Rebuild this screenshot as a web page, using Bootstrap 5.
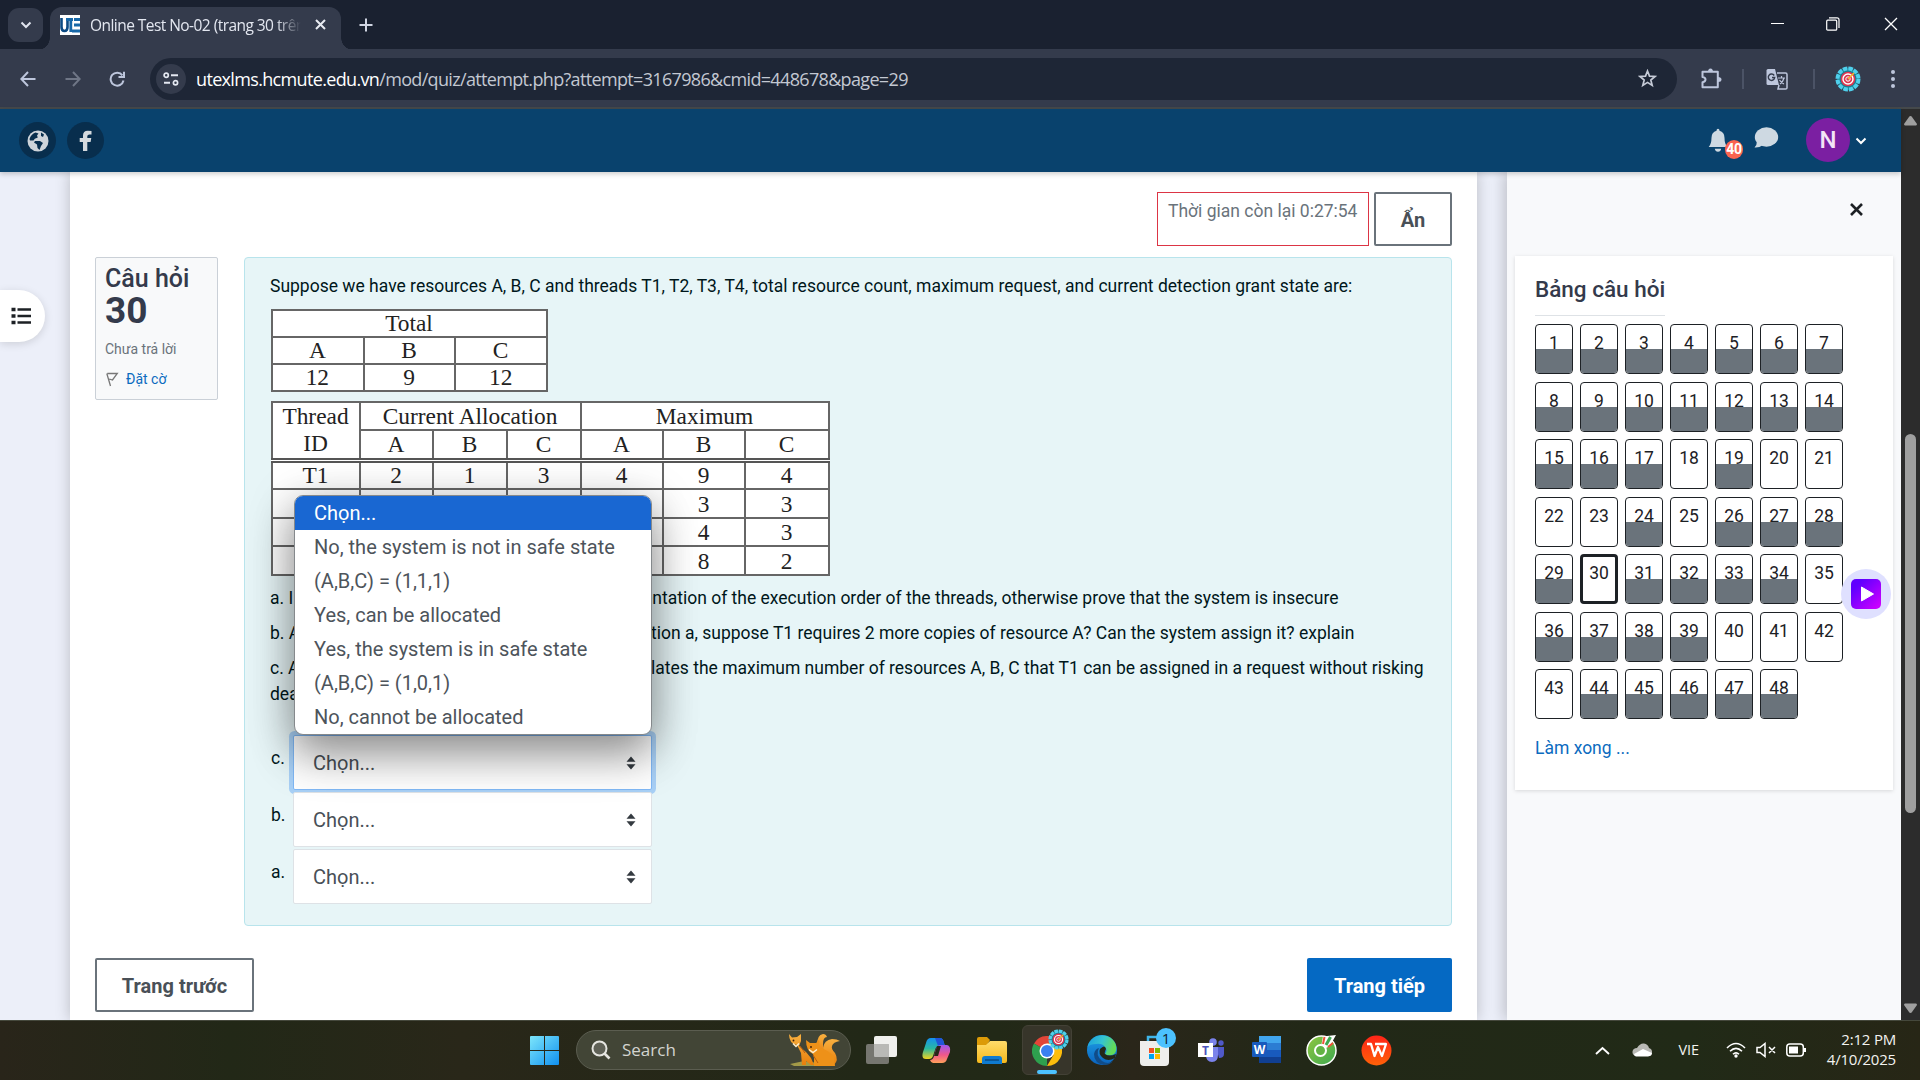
<!DOCTYPE html>
<html lang="vi">
<head>
<meta charset="utf-8">
<title>Online Test No-02</title>
<link href="https://cdn.jsdelivr.net/npm/bootstrap@5.3.0/dist/css/bootstrap.min.css" rel="stylesheet">
<style>
body{width:1920px;height:1080px;overflow:hidden;font-family:Roboto,sans-serif;font-size:17.5px;line-height:26px;color:#14202b;background:#eceff9}
.ui{font-family:"Open Sans","Noto Sans",sans-serif}
svg{display:block;flex:none}
.tabstrip{height:50px;background:#1a2130;padding-left:8px;padding-top:8px}
.tabsearch{width:35px;height:34px;border-radius:11px;background:#343b4c}
.browsertab{width:291px;height:43px;margin-left:7px;margin-top:-1px;border-radius:12px 12px 0 0;background:#343b4c;padding-left:10px;position:relative;color:#e3e7f0}
.browsertab::before,.browsertab::after{content:"";position:absolute;bottom:0;width:12px;height:12px}
.browsertab::before{left:-12px;background:radial-gradient(circle at 0 0,transparent 11.5px,#343b4c 12px)}
.browsertab::after{right:-12px;background:radial-gradient(circle at 100% 0,transparent 11.5px,#343b4c 12px)}
.tabtitle{width:211px;margin-left:10px;font-size:15.5px;letter-spacing:-.55px;white-space:nowrap;-webkit-mask-image:linear-gradient(90deg,#000 88%,transparent 100%)}
.toolbar{height:59px;background:#343b4c;border-bottom:2px solid #45494b;box-shadow:0 -1px 0 #343b4c}
.address{width:1527px;height:42px;border-radius:21px;background:#1e2636;margin-left:24px;padding:0 20px 0 6px;color:#c3c8d2;font-size:18px;letter-spacing:-.66px}
.siteinfo{width:30px;height:30px;border-radius:50%;background:#343b4c}
.vsep{width:2px;height:20px;background:#4b5366}
.sitebar{height:63px;width:1901px;background:#09426d;padding-left:19px;box-shadow:0 2px 5px #0003;position:relative;z-index:2}
.round{width:37px;height:37px;border-radius:50%;background:#082e4d}
.avatar{width:44px;height:44px;border-radius:50%;background:#7b1fa2;color:#f3e5f5;font-size:24px;font-weight:500;margin-top:-1px}
.count{position:absolute;left:17px;top:12px;width:18px;height:19px;border-radius:9px;background:#fa6450;color:#fff;font:700 14px/19px Roboto,sans-serif;text-align:center;letter-spacing:-.3px}
.viewport{height:848px}
.pagebody{width:1901px;padding-left:70px}
.sheet{width:1407px;background:#fff;box-shadow:0 0 14px #00000038;padding:20px 25px 0}
.timer{width:212px;height:54px;border:1px solid #dc3545;color:#6a737b;padding:5px 0 0 10px;white-space:nowrap}
.btn-line{border:2px solid #6a737b;border-radius:2px;color:#495057;background:#fff;font-size:20px;font-weight:700;height:54px;padding:1px 0 0}
.btn-next{border-radius:2px;background:#0569c3;color:#fff;font-size:20px;font-weight:700;height:54px;width:145px;padding:1px 0 0}
.qinfo{width:123px;height:143px;border:1px solid #cad0d7;border-radius:2px;background:#f8f9fa;padding:8px 9px}
.qinfo h3{font-size:25px;line-height:26px;color:#343a4b;margin:0;font-weight:500;white-space:nowrap}
.qinfo h3 span{font-size:37px;line-height:37px;font-weight:700;display:block}
.tiny{font-size:14px;line-height:20px}
.question{width:1208px;height:669px;margin-left:26px;background:#e7f5f7;border:1px solid #b8e4ec;border-radius:4px;padding:15px 24px 0 25px;position:relative;color:#00171b}
.sheetimg{border-collapse:collapse;table-layout:fixed;background:#fff;font-family:"Liberation Serif",serif;color:#222;font-size:23.4px;text-align:center;line-height:24px;margin-left:1px}
.sheetimg td{border:2px solid #666;padding:0 1px 0 0;overflow:hidden}
.sheetimg .dbl td{border-bottom:5px double #555}
.chooser{width:359px;height:55px;background:#fff;border:1px solid #dee2e6;border-radius:2px;padding:0 15px 0 19px;font-size:20px;color:#495057}
.chooser.on{border-color:#80b8f5;box-shadow:0 0 0 4px #a8d0f6}
.qlabel{width:22px;padding-top:11px}
.menu{position:absolute;z-index:4;left:49px;top:237px;width:358px;height:240px;border:1px solid #85898c;border-radius:9px;background:#fff;box-shadow:0 22px 44px #0000004d,0 8px 46px #00000040;overflow:hidden;font-size:20px;line-height:34px;color:#4d545b}
.menu div{padding-left:19px;height:34px;white-space:nowrap}
.menu .sel{background:#1967d2;color:#fff}
.drawer{width:394px;margin-left:30px;background:#f8f9fb;box-shadow:-3px 0 14px #0003;padding:84px 8px 0;position:relative}
.navcard{height:534px;background:#fff;box-shadow:0 1px 4px #00000022;padding:17px 0 0 20px}
.navcard h5{font-size:22.5px;line-height:32px;font-weight:500;color:#343a4b;border-bottom:1px solid #dee2e6;width:130px;height:43px;margin:0 0 8px;white-space:nowrap}
.grid{display:grid;grid-template-columns:repeat(7,38px);column-gap:7px;row-gap:7.5px}
.qn{height:50px;border:1px solid #1d2125;border-radius:4px;text-align:center;padding-top:5px;color:#1d2125;position:relative;font-size:17.5px;overflow:hidden}
.qn.done::after{content:"";position:absolute;left:0;right:0;bottom:0;height:24px;background:#6a737b}
.qn.now{border-width:3px;padding-top:3px}
.listbtn{position:absolute;left:0;top:290px;width:45px;height:52px;background:#fff;border-radius:0 26px 26px 0;box-shadow:0 2px 8px #0002;padding:16px 0 0 11px}
.play{position:absolute;z-index:5;left:1841px;top:569px}
.scroller{width:19px;height:911px;position:absolute;right:0;top:109px;background:#2c2c2c;padding:7px 3px}
.thumb{width:11px;height:379px;border-radius:6px;background:#9f9f9f;margin-left:1px}
.taskbar{height:60px;background:linear-gradient(90deg,#29251a,#222817 12%,#292719 24%,#222817 45%,#222917 52%,#2a261a 59%,#222817 68%,#212a17 88%,#272616);border-top:1px solid #45483c;color:#f3f3f0;position:relative;padding-bottom:1px}
.find{width:275px;height:40px;border-radius:20px;background:#424536;border:1px solid #5b5d50;margin-left:17px;padding:0 10px 0 14px;color:#d3d4cf;font-size:17px}
.slot{width:55px;display:flex;justify-content:center;align-items:center}
.hot{width:50px;height:50px;border-radius:6px;background:#37352a;border:1px solid #434136;position:relative}
</style>
<script src="https://cdn.jsdelivr.net/npm/bootstrap@5.3.0/dist/js/bootstrap.bundle.min.js"></script>
</head>
<body>
<svg width="0" height="0" class="position-absolute"><defs>
<linearGradient id="gwin" x1="0" y1="0" x2="1" y2="1"><stop stop-color="#7de6fb"/><stop offset="1" stop-color="#1090f0"/></linearGradient>
<linearGradient id="gplay" x1="0" y1="0" x2="1" y2="1"><stop offset=".2" stop-color="#6000ff"/><stop offset=".9" stop-color="#c800ff"/></linearGradient>
<linearGradient id="gcop1" x1="0" y1="0" x2="0" y2="1"><stop stop-color="#1590f0"/><stop offset=".5" stop-color="#2ab8a0"/><stop offset="1" stop-color="#f0d420"/></linearGradient>
<linearGradient id="gcop2" x1="0" y1="0" x2="0" y2="1"><stop stop-color="#9a58f0"/><stop offset=".55" stop-color="#f0578a"/><stop offset="1" stop-color="#ffa05a"/></linearGradient>
<linearGradient id="gfold" x1="0" y1="0" x2="0" y2="1"><stop stop-color="#ffdc6b"/><stop offset="1" stop-color="#f6b91c"/></linearGradient>
<linearGradient id="gedge" x1="0" y1="0" x2="1" y2=".3"><stop stop-color="#1a9de0"/><stop offset=".55" stop-color="#35c4d0"/><stop offset="1" stop-color="#62dc5a"/></linearGradient>
<linearGradient id="gedge2" x1="0" y1="0" x2="0" y2="1"><stop stop-color="#1fa3e8"/><stop offset="1" stop-color="#0a62bd"/></linearGradient>
<linearGradient id="gcc" x1="0" y1="0" x2="1" y2="1"><stop stop-color="#8fc640"/><stop offset="1" stop-color="#3da850"/></linearGradient>
<linearGradient id="gwps" x1="0" y1="0" x2="0" y2="1"><stop stop-color="#ff2418"/><stop offset="1" stop-color="#ff6208"/></linearGradient>
<linearGradient id="gfox" x1="0" y1="0" x2="0" y2="1"><stop stop-color="#f8b040"/><stop offset="1" stop-color="#e87f0c"/></linearGradient>
<symbol id="gear" viewBox="0 0 26 26"><circle cx="13" cy="13" r="11" fill="#187e92"/><circle cx="13" cy="13" r="10.500" fill="none" stroke="#4fd0ec" stroke-width="4" stroke-dasharray="4.500 1"/><circle cx="13" cy="13" r="7.300" fill="#dc3650"/><circle cx="13" cy="13" r="5" fill="none" stroke="#fff" stroke-width="1.400"/><circle cx="13" cy="13" r="2.200" fill="#dc3650" stroke="#fff"/><path d="M13 13L19 7" stroke="#f2b429" stroke-width="1.600"/></symbol>
<symbol id="updn" viewBox="0 0 10 14"><path d="M5 .5L9.500 5.700H.5zM5 13.500L9.500 8.300H.5z" fill="#343a40"/></symbol>
</defs></svg>

<header class="ui">
 <div class="tabstrip d-flex align-items-start">
  <div class="tabsearch d-flex align-items-center justify-content-center"><svg width="12" height="8"><path d="M1.500 1.500L6 6l4.500-4.500" fill="none" stroke="#e0e4ee" stroke-width="2"/></svg></div>
  <div class="browsertab d-flex align-items-center pb-2">
   <svg width="20" height="20"><rect width="20" height="20" fill="#fff"/><path d="M1.500 3v9q0 4 3 4t3-4V3" fill="none" stroke="#0b4a83" stroke-width="2.600"/><path d="M6 4.500h7M10.800 4.500V17M20 4.500h-6M20 10h-6M20 16h-8" stroke="#1768a8" stroke-width="2.800"/></svg>
   <div class="tabtitle">Online Test No-02 (trang 30 trên</div>
   <svg style="margin-left:13px" width="13" height="13"><path d="M2 2l9 9M11 2l-9 9" stroke="#e8ebf2" stroke-width="2"/></svg>
  </div>
  <svg style="margin:10px 0 0 18px" width="14" height="14"><path d="M7 0.500v13M.5 7h13" stroke="#d0d5e2" stroke-width="2"/></svg>
  <div class="d-flex align-items-center ms-auto" style="margin-top:9px;margin-right:22px">
   <svg width="14" height="14"><path d="M1 6.500h13" stroke="#fff"/></svg>
   <svg style="margin:0 44px 0 42px" width="14" height="14"><rect x=".7" y="3.200" width="10" height="10" rx="1" fill="none" stroke="#fff" stroke-width="1.200"/><path d="M3 .8h8q2 0 2 2V11" fill="none" stroke="#fff" stroke-width="1.200"/></svg>
   <svg width="14" height="14"><path d="M1 1l12 12M13 1L1 13" stroke="#fff" stroke-width="1.300"/></svg>
  </div>
 </div>
 <div class="toolbar d-flex align-items-center">
  <svg style="margin-left:20px" width="16" height="16"><path d="M15.500 8H1.500M8 1L1.300 8 8 15" fill="none" stroke="#bdc6dc" stroke-width="2"/></svg>
  <svg style="margin-left:29px" width="16" height="16"><path d="M.5 8h14M8 1l6.700 7L8 15" fill="none" stroke="#6f7686" stroke-width="2"/></svg>
  <svg style="margin-left:28px" width="17" height="16"><path d="M14.500 9.500A6.500 6.500 0 1 1 13.400 4.300M15 .8V6H9.500" fill="none" stroke="#bdc6dc" stroke-width="2"/></svg>
  <div class="address d-flex align-items-center">
   <div class="siteinfo d-flex align-items-center justify-content-center"><svg width="16" height="14"><path d="M8 3.200h7M1 10.800h6" stroke="#e4e8f1" stroke-width="2"/><circle cx="3.200" cy="3.200" r="2.100" fill="none" stroke="#e4e8f1" stroke-width="1.700"/><circle cx="12.500" cy="10.800" r="2.100" fill="none" stroke="#e4e8f1" stroke-width="1.700"/></svg></div>
   <div class="text-nowrap" style="margin-left:10px"><span class="text-white">utexlms.hcmute.edu.vn</span>/mod/quiz/attempt.php?attempt=3167986&amp;cmid=448678&amp;page=29</div>
   <svg class="ms-auto" width="19" height="19" viewBox="0 0 19 19"><path d="M9.500 2l2 5.100 5.500.4-4.200 3.500 1.400 5.400-4.700-3-4.700 3L6.200 11 2 7.500l5.500-.4z" fill="none" stroke="#c6cbd7" stroke-width="1.700"/></svg>
  </div>
  <svg style="margin-left:23px" width="22" height="22"><path d="M2.500 3.800h15.300v15.500H2.500v-5q3-.5 3-2.700t-3-2.700z" fill="none" stroke="#bdc6dc" stroke-width="2" stroke-linejoin="round"/><path d="M8 4q0-3.500 2.500-3.500T13 4zM18 9q3.500 0 3.500 2.500T18 14z" fill="#bdc6dc"/></svg>
  <div class="vsep" style="margin-left:20px"></div>
  <svg style="margin-left:22px" width="22" height="22"><path d="M2 1h7l4 16H2Q.5 17 .5 15.500v-13Q.5 1 2 1z" fill="#bdc6dc"/><path d="M11 5h8.500q1.500 0 1.500 1.500V20q0 1-1.500 1H12l1-4" fill="none" stroke="#bdc6dc" stroke-width="1.500"/><path d="M12 10h7M15.500 8v2M18 10q-1 4-4 6M13.500 12q2 3 4.500 4" fill="none" stroke="#bdc6dc" stroke-width="1.200"/><path d="M8.200 7.500A3.200 3.200 0 1 0 8.700 9.500H6" fill="none" stroke="#343b4c" stroke-width="1.400"/></svg>
  <div class="vsep" style="margin-left:25px"></div>
  <svg style="margin-left:20px" width="26" height="26"><use href="#gear"/></svg>
  <svg style="margin-left:29px" width="6" height="20" fill="#bdc6dc"><circle cx="3" cy="3" r="2"/><circle cx="3" cy="10" r="2"/><circle cx="3" cy="17" r="2"/></svg>
 </div>
</header>

<nav class="sitebar d-flex align-items-center">
 <div class="round d-flex align-items-center justify-content-center"><svg width="22" height="22"><circle cx="11" cy="11" r="10.500" fill="#ced4da"/><path d="M2.500 9q1.500-5 6-6.500l3 1-1.500 2 .8 2-3 1.300-1.300 1.700H3zM14 2.500l3 2-1 2.500-2-1zM8 11h5l3 2-2 3-1.500 4-2-2-.5-3.500-3-2z" fill="#082e4d"/></svg></div>
 <div class="round d-flex align-items-center justify-content-center" style="margin-left:11px"><svg width="14" height="22"><path d="M4 21V12H.7V8H4V5.500Q4 .8 8.800.8q2 0 3.700.3v3.400h-2Q8.300 4.500 8.300 6.300V8h4l-.7 4H8.300v9z" fill="#d5dade"/></svg></div>
 <div class="ms-auto position-relative"><svg width="20" height="25"><path d="M10 .8q1.500 0 1.500 2 5 1.500 5 7 0 6 2.800 9.200H.7Q3.500 16 3.500 9.800q0-5.500 5-7 0-2 1.500-2zM6.800 20.800h6.400q-.5 3-3.200 3t-3.200-3z" fill="#ced9e2"/></svg><span class="count">40</span></div>
 <svg style="margin:-6px 27px 0 26px" width="25" height="22"><ellipse cx="12.500" cy="10" rx="11.700" ry="9.700" fill="#ced9e2"/><path d="M3 14q0 4-2.500 6.500Q5 21 9 18z" fill="#ced9e2"/></svg>
 <div class="avatar d-flex align-items-center justify-content-center">N</div>
 <svg style="margin:1px 34px 0 5px" width="12" height="8"><path d="M1.500 1.500L6 6l4.500-4.500" fill="none" stroke="#fff" stroke-width="2"/></svg>
</nav>

<div class="viewport overflow-hidden">
<div class="pagebody d-flex h-100">
 <main class="sheet">
  <div class="d-flex justify-content-end"><div class="timer">Thời gian còn lại 0:27:54</div><button class="btn btn-line" style="width:78px;margin-left:5px">Ẩn</button></div>
  <div class="d-flex align-items-start" style="margin-top:11px">
   <aside class="qinfo">
    <h3>Câu hỏi <span>30</span></h3>
    <div class="tiny" style="color:#6a737b;margin-top:10px">Chưa trả lời</div>
    <div class="tiny d-flex align-items-center" style="color:#0b6bbf;margin-top:10px"><svg width="13" height="15" style="margin:0 7px 0 1px"><path d="M.8 1.500L4.500 14M1.300 1.500h10L6.500 8 3.200 7" fill="none" stroke="#777" stroke-width="1.300"/></svg>Đặt cờ</div>
   </aside>
   <section class="question">
    <div class="text-nowrap">Suppose we have resources A, B, C and threads T1, T2, T3, T4, total resource count, maximum request, and current detection grant state are:</div>
    <table class="sheetimg" style="width:277px;margin-top:10px;line-height:23px">
     <tr style="height:27px"><td colspan="3">Total</td></tr>
     <tr style="height:27px"><td>A</td><td>B</td><td>C</td></tr>
     <tr style="height:27px"><td>12</td><td>9</td><td>12</td></tr>
    </table>
    <table class="sheetimg" style="width:557px;margin-top:9px">
     <colgroup><col style="width:88px"><col style="width:73px"><col style="width:74px"><col style="width:74px"><col style="width:82px"><col style="width:82px"><col style="width:84px"></colgroup>
     <tr style="height:28px"><td rowspan="2" style="line-height:27px;border-bottom:5px double #555">Thread<br>ID</td><td colspan="3">Current Allocation</td><td colspan="3">Maximum</td></tr>
     <tr class="dbl" style="height:30px"><td>A</td><td>B</td><td>C</td><td>A</td><td>B</td><td>C</td></tr>
     <tr style="height:29px"><td>T1</td><td>2</td><td>1</td><td>3</td><td>4</td><td>9</td><td>4</td></tr>
     <tr style="height:29px"><td></td><td></td><td></td><td></td><td></td><td>3</td><td>3</td></tr>
     <tr style="height:28px"><td></td><td></td><td></td><td></td><td></td><td>4</td><td>3</td></tr>
     <tr style="height:29px"><td></td><td></td><td></td><td></td><td></td><td>8</td><td>2</td></tr>
    </table>
    <div class="d-flex text-nowrap" style="margin-top:9px"><span style="width:373px">a. I</span><span>entation of the execution order of the threads, otherwise prove that the system is insecure</span></div>
    <div class="d-flex text-nowrap" style="margin-top:9px"><span style="width:381px">b. A</span><span>tion a, suppose T1 requires 2 more copies of resource A? Can the system assign it? explain</span></div>
    <div class="d-flex text-nowrap" style="margin-top:9px"><span style="width:381px">c. A</span><span>lates the maximum number of resources A, B, C that T1 can be assigned in a request without risking</span></div>
    <div>dead</div>
    <div class="d-flex" style="margin:28px 0 0 1px"><span class="qlabel" style="padding-top:10px">c.</span><div class="chooser on d-flex align-items-center justify-content-between">Chọn...<svg width="10" height="14"><use href="#updn"/></svg></div></div>
    <div class="d-flex" style="margin:2px 0 0 1px"><span class="qlabel" style="padding-top:10px">b.</span><div class="chooser d-flex align-items-center justify-content-between">Chọn...<svg width="10" height="14"><use href="#updn"/></svg></div></div>
    <div class="d-flex" style="margin:2px 0 0 1px"><span class="qlabel" style="padding-top:10px">a.</span><div class="chooser d-flex align-items-center justify-content-between">Chọn...<svg width="10" height="14"><use href="#updn"/></svg></div></div>
    <div class="menu"><div class="sel">Chọn...</div><div>No, the system is not in safe state</div><div>(A,B,C) = (1,1,1)</div><div>Yes, can be allocated</div><div>Yes, the system is in safe state</div><div>(A,B,C) = (1,0,1)</div><div>No, cannot be allocated</div></div>
   </section>
  </div>
  <div class="d-flex justify-content-between" style="margin-top:32px"><button class="btn btn-line" style="width:159px">Trang trước</button><button class="btn btn-next">Trang tiếp</button></div>
 </main>
 <aside class="drawer">
  <svg class="position-absolute" style="left:342px;top:30px" width="15" height="15"><path d="M2 2l11 11M13 2L2 13" stroke="#1d2125" stroke-width="2.600"/></svg>
  <div class="navcard">
   <h5>Bảng câu hỏi</h5>
   <div class="grid" id="grid"></div>
   <div style="color:#0b6bbf;margin-top:16px">Làm xong ...</div>
  </div>
 </aside>
</div>
</div>
<div class="listbtn"><svg width="20" height="20"><path d="M6.500 3.500H20M6.500 10H20M6.500 16.500H20" stroke="#1d2125" stroke-width="2.400"/><path d="M.5 3.500h4M.5 10h4M.5 16.500h4" stroke="#1d2125" stroke-width="3.600"/></svg></div>
<svg class="play" width="50" height="50"><circle cx="25" cy="25" r="25" fill="#dfe0ff"/><rect x="10" y="10" width="30" height="30" rx="5" fill="url(#gplay)"/><path d="M20.500 18l12 7-12 7z" fill="#fff" stroke="#fff" stroke-linejoin="round"/></svg>
<div class="scroller d-flex flex-column">
 <svg width="13" height="10"><path d="M6.500 0q1 0 1.500 1l5 7q0 1-1 1.500H1Q0 9 0 8l5-7q.5-1 1.500-1z" fill="#9f9f9f"/></svg>
 <div class="thumb" style="margin-top:308px"></div>
 <svg class="mt-auto" width="13" height="10"><path d="M6.500 10q-1 0-1.500-1L0 2Q0 .8 1 .5h11q1 .3 1 1.500L8 9q-.5 1-1.500 1z" fill="#9f9f9f"/></svg>
</div>

<footer class="taskbar ui d-flex align-items-center">
 <svg style="margin-left:530px" width="29" height="29"><path d="M1 0h13v14H0V1q0-1 1-1zM15 0h13q1 0 1 1v13H15zM0 15h14v14H1q-1 0-1-1zM15 15h14v13q0 1-1 1H15z" fill="url(#gwin)"/></svg>
 <div class="find d-flex align-items-center">
  <svg width="20" height="20"><circle cx="8.500" cy="8.500" r="7" fill="#5f6156" stroke="#e5e5e0" stroke-width="2"/><path d="M13.500 13.500l5 5" stroke="#e5e5e0" stroke-width="2.600"/></svg>
  <span style="margin-left:11px">Search</span>
  <svg class="ms-auto" width="52" height="34"><path d="M2 31l14-3 14 2 3 3H6z" fill="#a39a48"/><path d="M29 12q0-10 6-11 3 0 4 3-4 0-4 7l1 10-6 1z" fill="url(#gfox)"/><path d="M35 15q1-8 9-9 5 0 8 2-7 1-8 5-1 3 3 7 4 7-1 12l-8-4q5-2 0-7-3-3-3-6z" fill="url(#gfox)"/><path d="M1 1l3 3.500 5-.5 4-3 0 7-2 5 7 6 5 6 3 7h-3l-5-4 0 4h-4l-1-12-4-8Q1 11 1 1z" fill="url(#gfox)"/><path d="M18 7l4 3 6 0 3-3 1 8q9 2 14 9l1 9H26l0-8-1-4q-7-3-7-14z" fill="#ee9118"/><path d="M5 10.500l3 3 3-3M21 16.500l4 3 4-3" fill="none" stroke="#fff0d0" stroke-width="1.500"/><circle cx="5.500" cy="7.500" r=".9" fill="#3a1c08"/><circle cx="23" cy="14" r=".9" fill="#3a1c08"/><path d="M12 13l5 7M25 22l5 8" stroke="#b85c10" fill="none"/></svg>
 </div>
 <div class="d-flex align-items-center" style="margin-left:3px">
  <div class="slot"><svg width="31" height="29"><rect x="8" y="0" width="23" height="21" rx="2" fill="#f0f0ee"/><rect y="8" width="23" height="20" rx="2" fill="#767670"/><path d="M8 8h14q1 0 1 1v12H9q-1 0-1-1z" fill="#b9b9b6"/></svg></div>
  <div class="slot"><svg width="29" height="27" viewBox="0 0 29 27"><path d="M9 1h9q3 0 4 5l1 3h-6q-3 0-4 4l-2 6q-1 3-4 3H4q-5 0-3-7l3-9q1-5 5-5z" fill="url(#gcop1)"/><path d="M13 1h5q3 0 4 5l1 3h-7z" fill="#2054d8"/><path d="M20 26h-9q-2 0-3-3 3 0 4-4l2-7q1-4 5-4h6q4 1 3 7l-3 7q-1 4-5 4z" fill="url(#gcop2)"/><path d="M12 19l3-10h4l-3 10z" fill="#292719"/></svg></div>
  <div class="slot"><svg width="30" height="27"><path d="M0 2q0-2 2-2h8l3 3-3 5H0z" fill="#dc9b08"/><path d="M0 8h9l4-4h15q2 0 2 2v18q0 2-2 2H2q-2 0-2-2z" fill="url(#gfold)"/><path d="M5 27v-5q0-3 3-3h14q3 0 3 3v5z" fill="#0f7bd0"/><path d="M8 23h14" stroke="#0a4b86" stroke-width="1.500"/></svg></div>
  <div class="slot"><div class="hot"><svg style="margin:10px 0 0 9px" width="30" height="30" viewBox="0 0 30 30"><path d="M15 15L2 7.500A15 15 0 0 1 28 7.500z" fill="#e24538"/><path d="M15 15v15A15 15 0 0 1 2 7.500z" fill="#2ea04e"/><path d="M15 7.500h13A15 15 0 0 1 15 30l6.500-11z" fill="#fdbd0c"/><circle cx="15" cy="15" r="7.500" fill="#fff"/><circle cx="15" cy="15" r="6" fill="#3a80f0"/></svg><svg class="position-absolute" style="left:25px;top:3px" width="21" height="21"><use href="#gear"/></svg><div class="position-absolute" style="left:14px;bottom:0;width:20px;height:4px;border-radius:2px;background:#4cc2ff"></div></div></div>
  <div class="slot"><svg width="30" height="30"><circle cx="15" cy="15" r="15" fill="url(#gedge2)"/><path d="M.5 12C3 1 15-2 23 2.500S31 19 25 20q-5 1-7-1 3-4 0-7-3-4-9-3Q3 9 .5 12z" fill="url(#gedge)"/><path d="M12 13q-4 7 3 13 6 4 11 0-3 4-8 4Q7 29 7 19q1-5 5-6z" fill="#114c88"/><path d="M13 14q5-5 6 0-2 4-1 5 4 3 11 0l-1 4q-7 4-12 0-5-4-3-9z" fill="#242718"/></svg></div>
  <div class="slot"><svg style="margin-top:-7px" width="38" height="38" viewBox="0 0 38 38"><path d="M10 14V9h10" stroke="#3fb5e8" stroke-width="2.500" fill="none"/><path d="M2 13h29v21q0 4-4 4H6q-4 0-4-4z" fill="#eeeeec"/><path d="M11 20h5v5h-5z" fill="#f25022"/><path d="M17 20h5v5h-5z" fill="#7fba00"/><path d="M11 26h5v5h-5z" fill="#00a4ef"/><path d="M17 26h5v5h-5z" fill="#ffb900"/><circle cx="28" cy="10" r="10" fill="#4cc2ff"/><text x="28" y="15.500" font-size="15" text-anchor="middle" fill="#102030">1</text></svg></div>
  <div class="slot"><svg width="27" height="24"><circle cx="15" cy="4" r="3.800" fill="#7b83eb"/><circle cx="23" cy="5" r="2.700" fill="#5059c9"/><path d="M18 9h8v7q0 4-5 4z" fill="#5059c9"/><path d="M8 9h12v8q0 7-6 7t-6-7z" fill="#7b83eb"/><rect y="5" width="15" height="14" fill="#fff"/><text x="7.500" y="16.500" font-size="12" font-weight="700" text-anchor="middle" fill="#4b53bc">T</text></svg></div>
  <div class="slot"><svg width="30" height="28"><path d="M7 0h22v7H7z" fill="#41a5ee"/><path d="M7 7h22v7H7z" fill="#2b7cd3"/><path d="M7 14h22v7H7z" fill="#185abd"/><path d="M7 21h22v6H7z" fill="#103f91"/><rect y="6" width="15" height="15" rx="1" fill="#185abd"/><text x="7.500" y="18" font-size="12" font-weight="700" text-anchor="middle" fill="#fff">W</text></svg></div>
  <div class="slot"><svg width="31" height="31"><circle cx="15.500" cy="15.500" r="14.500" fill="url(#gcc)" stroke="#fff" stroke-width="1.500"/><path d="M15 12L17 1h4l9-1-6 11-6 3z" fill="#fff"/><path d="M17 9l1.500-7" stroke="#ee5137" stroke-width="2"/><path d="M20 10l4.500-8" stroke="#3da850" stroke-width="3"/><path d="M22 12l5-4" stroke="#ee5137" stroke-width="2"/><circle cx="14.500" cy="15.500" r="5.500" fill="#62b345" stroke="#fff" stroke-width="2"/></svg></div>
  <div class="slot"><svg width="31" height="31"><circle cx="15.500" cy="15.500" r="15" fill="url(#gwps)"/><path d="M6 9h4l3.500 12L17 12l4 9L25 9H14" fill="none" stroke="#fff" stroke-width="2.300" stroke-linejoin="round"/></svg></div>
 </div>
 <div class="d-flex align-items-center ms-auto" style="margin-right:24px">
  <svg width="15" height="9"><path d="M1 8l6.500-6L14 8" fill="none" stroke="#fff" stroke-width="1.900"/></svg>
  <svg style="margin-left:22px" width="21" height="14"><path d="M4 13Q0 12 .5 8.500T5 5q3-5 7-4.500T17 5q3.500 1 3 5-1 3-4 3z" fill="#b9b9b5"/><path d="M2 11l9-5 9 4q0 3-4 3.500H4Q2 13 2 11z" fill="#fff"/></svg>
  <span style="margin-left:26px;font-size:14.500px;letter-spacing:-.2px">VIE</span>
  <svg style="margin-left:27px" width="20" height="16"><path d="M1 6Q10-3 19 6M4 9.300q6-6 12 0M7 12.300q3-3 6 0" fill="none" stroke="#fff" stroke-width="1.600"/><circle cx="10" cy="14" r="1.700" fill="#fff"/></svg>
  <svg style="margin-left:10px" width="20" height="16"><path d="M1 5.500h3L9 1.500v13L4 10.500H1zM13 5l6 6M19 5l-6 6" fill="none" stroke="#fff" stroke-width="1.500"/></svg>
  <svg style="margin-left:10px" width="20" height="14"><rect x=".8" y="1" width="16.500" height="12" rx="3" fill="none" stroke="#fff" stroke-width="1.500"/><rect x="3" y="3.500" width="9" height="7" fill="#fff"/><path d="M19 5v4" stroke="#fff" stroke-width="2"/></svg>
  <div class="text-end" style="margin:-2px 0 0 21px;font-size:15px;line-height:20px;letter-spacing:-.2px">2:12 PM<br>4/10/2025</div>
 </div>
</footer>
<script>
const open=[18,20,21,22,23,25,30,35,40,41,42,43];
let h='';
for(let i=1;i<=48;i++)h+=`<div class="qn ${open.includes(i)?'':'done'} ${i===30?'now':''}">${i}</div>`;
document.getElementById('grid').innerHTML=h;
</script>
</body>
</html>
